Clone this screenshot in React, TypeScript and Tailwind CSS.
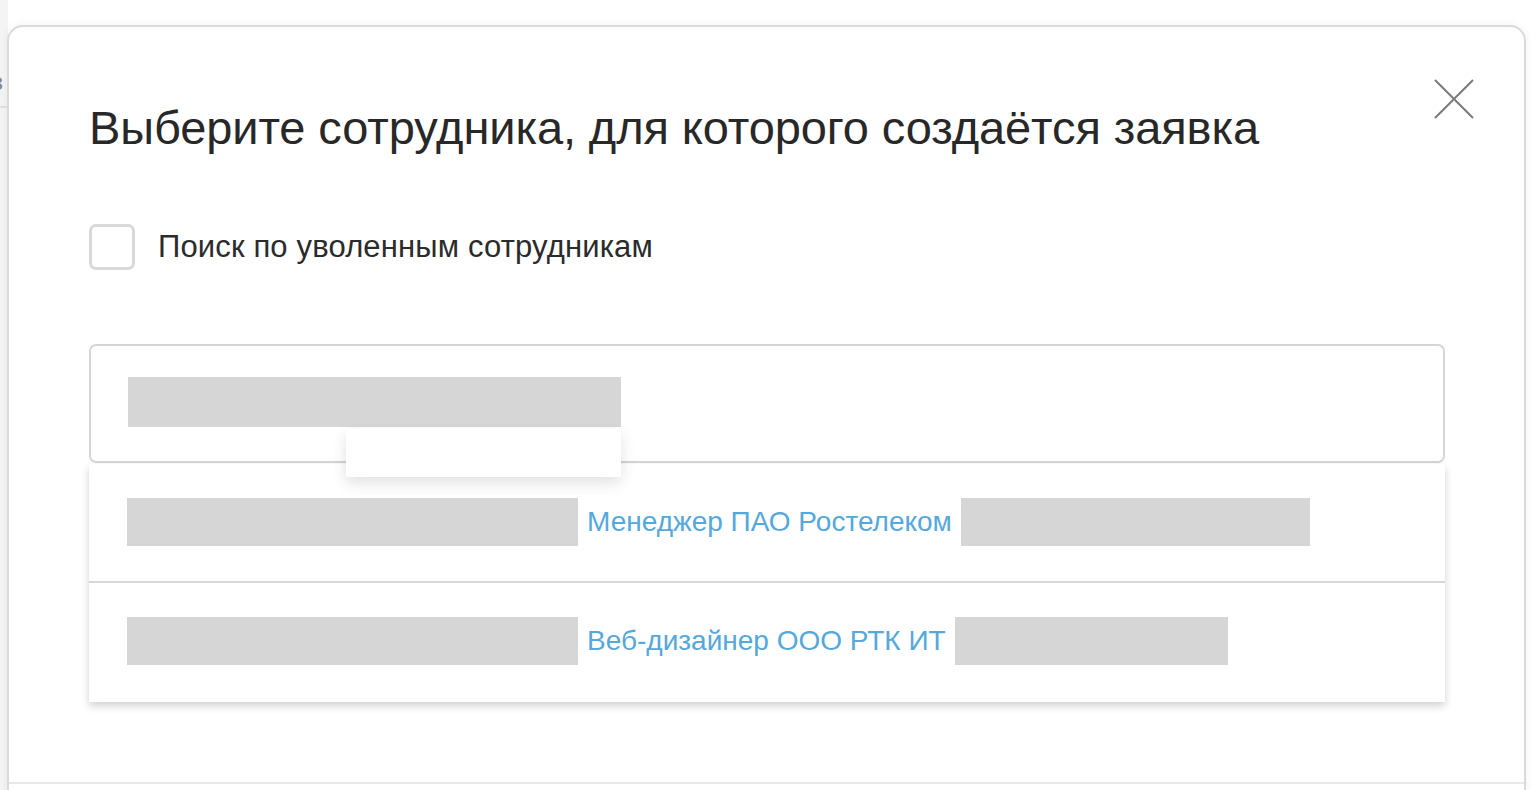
const font = { fontFamily: '"Liberation Sans", Arial, sans-serif' }

function Redacted({ w }: { w: string }) {
  return <div className={`h-[48px] shrink-0 bg-[#d6d6d6] ${w}`} />
}

function ResultRow({ role, tail, last }: { role: string; tail: string; last?: boolean }) {
  return (
    <div
      className={`flex h-[119px] items-center pl-[38px] ${last ? 'pb-[2px]' : 'border-b-2 border-[#d6d6d6]'}`}
    >
      <Redacted w="w-[451px]" />
      <span className="px-[9px] text-[28px] text-[#55a8db]">{role}</span>
      <Redacted w={tail} />
    </div>
  )
}

export default function App() {
  return (
    <div className="relative h-[790px] w-full overflow-hidden bg-white" style={font}>
      {/* page behind the modal */}
      <div className="absolute left-0 top-0 h-full w-[8px] bg-[#f4f4f4]">
        <div className="mt-[70px] -ml-[8px] text-[24px] leading-none text-[#888]">з</div>
        <div className="mt-[12px] h-[2px] w-full bg-[#e2e2e2]" />
      </div>

      <div className="absolute left-[7px] top-[25px] h-[900px] w-[1519px] rounded-[16px] border-2 border-[#dadada] bg-white shadow-[0_0_10px_rgba(0,0,0,0.06)]">
        <button
          type="button"
          className="absolute left-[1425px] top-[52px]"
          aria-label="close"
        >
          <svg width="40" height="40" viewBox="0 0 40 40" fill="none">
            <path d="M1 1L39 39M39 1L1 39" stroke="#7a7a7a" strokeWidth="2" />
          </svg>
        </button>

        <div className="pl-[80px] pr-[79px] pt-[75px]">
          <h1 className="text-[47px] leading-[52px] tracking-[-0.1px] text-[#282828]">
            Выберите сотрудника, для которого создаётся заявка
          </h1>

          <label className="mt-[70px] flex items-center gap-[23px]">
            <span className="h-[46px] w-[46px] rounded-[7px] border-[3px] border-[#d9d9d9] bg-white" />
            <span className="text-[31px] tracking-[0.15px] text-[#2b2b2b]">
              Поиск по уволенным сотрудникам
            </span>
          </label>

          <div className="relative mt-[73px]">
            <div className="h-[119px] rounded-[7px] border-2 border-[#d6d6d6] pl-[37px] pt-[31px]">
              <Redacted w="w-[493px] h-[50px]" />
            </div>
            <div className="absolute left-[257px] top-[85px] z-10 h-[48px] w-[275px] bg-white shadow-[0_6px_14px_rgba(0,0,0,0.12)]" />

            <div className="mt-[1px] bg-white shadow-[0_4px_8px_rgba(0,0,0,0.18)]">
              <ResultRow role="Менеджер ПАО Ростелеком" tail="w-[349px]" />
              <ResultRow role="Веб-дизайнер ООО РТК ИТ" tail="w-[273px]" last />
            </div>
          </div>
        </div>

        <div className="absolute left-0 right-0 top-[755px] h-[2px] bg-[#e6e8eb]" />
      </div>
    </div>
  )
}
